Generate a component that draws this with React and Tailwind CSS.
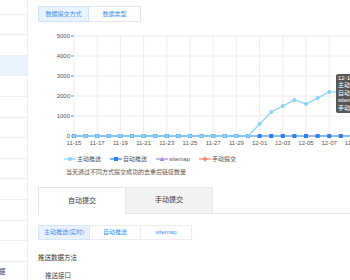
import React from 'react';

const font = { fontFamily: '"Liberation Sans","Noto Sans CJK SC",sans-serif' };

// 11-15 .. 12-09
const mainPush = [0, 0, 0, 0, 0, 0, 0, 0, 0, 0, 0, 0, 0, 0, 0, 0, 600, 1200, 1500, 1800, 1600, 1900, 2200, 2200, 2200];
const xLabels = ['11-15', '11-17', '11-19', '11-21', '11-23', '11-25', '11-27', '11-29', '12-01', '12-03', '12-05', '12-07', '12-09'];

const X0 = 46;
const DAY = 11.6;
const px = (i) => X0 + i * DAY;
const py = (v) => 108 - v * 0.02;

function Chart() {
  const lightPts = mainPush.map((v, i) => `${px(i)},${py(v)}`).join(' ');
  return (
    <svg width="322" height="124" className="block mt-[6px]" style={font}>
      {[0, 1000, 2000, 3000, 4000, 5000].map((v) => (
        <g key={v}>
          <line x1={X0} x2="322" y1={py(v)} y2={py(v)} stroke="#ececec" strokeWidth="1" />
          <line x1="43" x2={X0} y1={py(v)} y2={py(v)} stroke="#777" strokeWidth="1" />
          <text x="42" y={py(v) + 2} textAnchor="end" fontSize="6" fill="#555">{v}</text>
        </g>
      ))}
      {xLabels.map((l, k) => (
        <g key={l}>
          <line x1={X0 + k * 23.2} x2={X0 + k * 23.2} y1="8" y2="108" stroke="#ececec" strokeWidth="1" />
          <text x={X0 + k * 23.2} y="117" textAnchor="middle" fontSize="6" fill="#555">{l}</text>
        </g>
      ))}
      {/* 自动推送 */}
      <line x1={X0} x2="322" y1="108" y2="108" stroke="#2f7fe6" strokeWidth="1.2" />
      {mainPush.map((_, i) => (
        <rect key={i} x={px(i) - 2} y="106" width="4" height="4" fill="#2f7fe6" />
      ))}
      {/* 主动推送 */}
      <polyline points={lightPts} fill="none" stroke="#86d3f7" strokeWidth="1.2" />
      {mainPush.map((v, i) => (
        <circle key={i} cx={px(i)} cy={py(v)} r="2" fill="#86d3f7" />
      ))}
    </svg>
  );
}

function LegendMark({ color, shape }) {
  return (
    <svg width="12" height="6" className="block">
      <line x1="0" x2="12" y1="3" y2="3" stroke={color} strokeWidth="1.2" />
      {shape === 'circle' && <circle cx="6" cy="3" r="2" fill={color} />}
      {shape === 'square' && <rect x="4" y="1" width="4" height="4" fill={color} />}
      {shape === 'triangle' && <polygon points="6,0.5 8.5,5 3.5,5" fill={color} />}
      {shape === 'diamond' && <polygon points="6,0.5 8.5,3 6,5.5 3.5,3" fill={color} />}
    </svg>
  );
}

const legend = [
  { label: '主动推送', color: '#86d3f7', shape: 'circle' },
  { label: '自动推送', color: '#2f7fe6', shape: 'square' },
  { label: 'sitemap', color: '#a48be0', shape: 'triangle' },
  { label: '手动提交', color: '#f7826e', shape: 'diamond' },
];

export default function App() {
  return (
    <div className="w-[350px] h-[280px] overflow-hidden flex bg-white text-[#333]" style={font}>
      {/* 侧边栏 */}
      <div className="w-[28px] shrink-0 border-r border-[#eeeeee] flex flex-col overflow-hidden">
        <div className="h-[14.6px] shrink-0 border-b border-[#eeeeee]"></div>
        {Array.from({ length: 13 }).map((_, i) => (
          <div
            key={i}
            className={`h-[20.6px] shrink-0 border-b border-[#eeeeee] flex items-center ${i === 2 ? 'bg-[#e9f3fd]' : ''}`}
          >
            {i === 12 && <span className="text-[6.5px] -ml-[1px] text-[#444]">据</span>}
          </div>
        ))}
      </div>

      {/* 主区域 */}
      <div className="flex-1 flex flex-col relative">
        <div className="pt-[6px] pl-[10px] flex">
          <div className="w-[51px] h-[16px] border border-[#cfe3fa] bg-[#e8f3ff] text-[#3d8ef0] text-[6px] flex items-center justify-center">
            数据提交方式
          </div>
          <div className="w-[52px] h-[16px] border border-l-0 border-[#e5e5e5] text-[#3d8ef0] text-[6px] flex items-center justify-center">
            数据类型
          </div>
        </div>

        <Chart />

        {/* tooltip */}
        <div className="absolute left-[308px] top-[74px] w-[40px] h-[39px] rounded-[2px] bg-[rgba(50,50,50,0.82)] text-white text-[6px] leading-[7.5px] pl-[2px] flex flex-col justify-center whitespace-nowrap overflow-hidden">
          <span>12-10</span>
          <span>主动推送: 2281</span>
          <span>自动推送: 0</span>
          <span>sitemap: 0</span>
          <span>手动提交: 0</span>
        </div>

        <div className="mt-[4px] h-[8px] pl-[36px] flex items-center gap-[9px] text-[6px] text-[#555]">
          {legend.map((l) => (
            <div key={l.label} className="flex items-center gap-[1px]">
              <LegendMark color={l.color} shape={l.shape} />
              <span>{l.label}</span>
            </div>
          ))}
        </div>
        <div className="mt-[5px] h-[8px] leading-[8px] pl-[38px] text-[6px] text-[#555]">
          当天通过不同方式提交成功的去重后链接数量
        </div>

        {/* 提交方式 tab */}
        <div className="mt-[11px] pl-[10px] flex">
          <div className="w-[88px] h-[27px] border border-b-0 border-[#e5e5e5] bg-white flex items-center justify-center text-[7px] text-[#333]">
            自动提交
          </div>
          <div className="w-[87px] h-[27px] border border-l-0 border-[#e5e5e5] bg-[#f2f2f2] flex items-center justify-center text-[7px] text-[#333]">
            手动提交
          </div>
          <div className="flex-1 h-[27px] border-b border-[#e5e5e5]"></div>
        </div>

        <div className="mt-[11px] pl-[10px] flex">
          <div className="w-[52px] h-[15px] border border-[#d6e7fb] bg-[#e8f3ff] text-[#3d8ef0] text-[6px] flex items-center justify-center">
            主动推送(实时)
          </div>
          <div className="w-[51px] h-[15px] border border-l-0 border-[#ececec] text-[#3d8ef0] text-[6px] flex items-center justify-center">
            自动推送
          </div>
          <div className="w-[51px] h-[15px] border border-l-0 border-[#ececec] text-[#3d8ef0] text-[6px] flex items-center justify-center">
            sitemap
          </div>
        </div>

        <div className="mt-[14px] h-[8px] leading-[8px] pl-[10px] text-[6.5px] text-[#333]">推送数据方法</div>
        <div className="mt-[10px] h-[8px] leading-[8px] pl-[17px] text-[6.5px] text-[#444]">推送接口</div>
      </div>
    </div>
  );
}
